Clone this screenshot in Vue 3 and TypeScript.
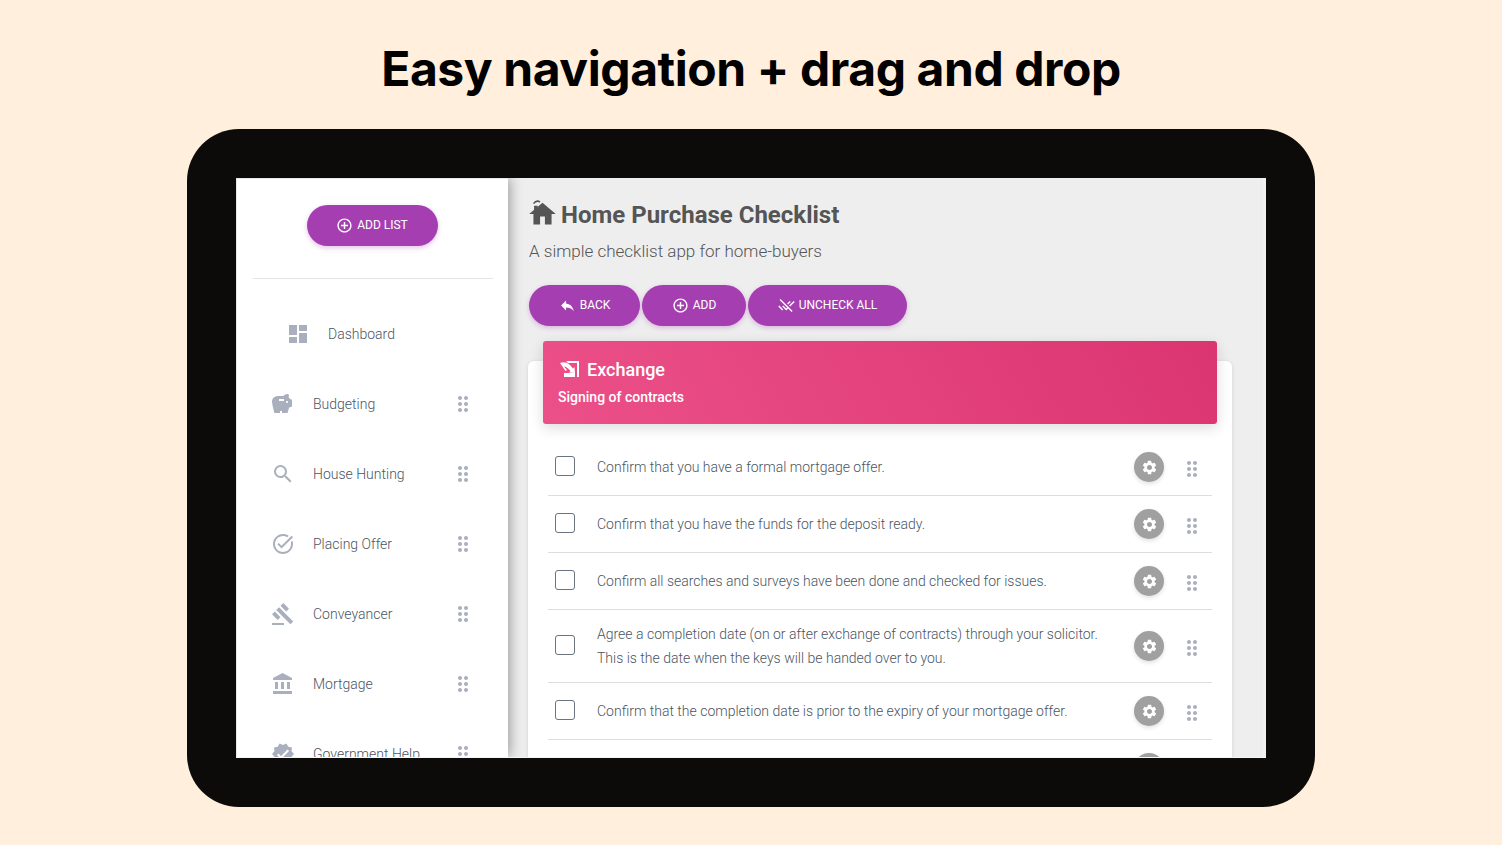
<script setup lang="ts">
interface NavItem {
  label: string;
  icon: string;
}

const icons = {
  plus: 'M13 7h-2v4H7v2h4v4h2v-4h4v-2h-4V7zm-1-5C6.48 2 2 6.48 2 12s4.48 10 10 10 10-4.48 10-10S17.52 2 12 2zm0 18c-4.41 0-8-3.59-8-8s3.59-8 8-8 8 3.59 8 8-3.59 8-8 8z',
  reply: 'M10 9V5l-7 7 7 7v-4.1c5 0 8.5 1.6 11 5.1-1-5-4-10-11-11z',
  removeDone: 'M1.79 12l5.58 5.59L5.96 19 .37 13.41 1.79 12zm.45-7.78L12.9 14.89l-1.28 1.28L7.44 12l-1.41 1.41L11.62 19l2.69-2.69 4.89 4.89 1.41-1.41L3.65 2.81 2.24 4.22zm14.9 9.27L23.62 7 22.2 5.59l-6.48 6.48 1.42 1.42zM17.96 7l-1.41-1.41-3.65 3.66 1.41 1.41L17.96 7z',
  dashboard: 'M3 13h8V3H3v10zm0 8h8v-6H3v6zm10 0h8V11h-8v10zm0-18v6h8V3h-8z',
  drag: 'M11 18c0 1.1-.9 2-2 2s-2-.9-2-2 .9-2 2-2 2 .9 2 2zm-2-8c-1.1 0-2 .9-2 2s.9 2 2 2 2-.9 2-2-.9-2-2-2zm0-6c-1.1 0-2 .9-2 2s.9 2 2 2 2-.9 2-2-.9-2-2-2zm6 4c1.1 0 2-.9 2-2s-.9-2-2-2-2 .9-2 2 .9 2 2 2zm0 2c-1.1 0-2 .9-2 2s.9 2 2 2 2-.9 2-2-.9-2-2-2zm0 6c-1.1 0-2 .9-2 2s.9 2 2 2 2-.9 2-2-.9-2-2-2z',
  gear: 'M19.14 12.94c.04-.3.06-.61.06-.94 0-.32-.02-.64-.07-.94l2.03-1.58c.18-.14.23-.41.12-.61l-1.92-3.32c-.12-.22-.37-.29-.59-.22l-2.39.96c-.5-.38-1.03-.7-1.62-.94l-.36-2.54c-.04-.24-.24-.41-.48-.41h-3.84c-.24 0-.43.17-.47.41l-.36 2.54c-.59.24-1.13.57-1.62.94l-2.39-.96c-.22-.08-.47 0-.59.22L2.74 8.87c-.12.21-.08.47.12.61l2.03 1.58c-.05.3-.09.63-.09.94s.02.64.07.94l-2.03 1.58c-.18.14-.23.41-.12.61l1.92 3.32c.12.22.37.29.59.22l2.39-.96c.5.38 1.03.7 1.62.94l.36 2.54c.05.24.24.41.48.41h3.84c.24 0 .44-.17.47-.41l.36-2.54c.59-.24 1.13-.56 1.62-.94l2.39.96c.22.08.47 0 .59-.22l1.92-3.32c.12-.22.07-.47-.12-.61l-2.01-1.58zM12 15.6c-1.98 0-3.6-1.62-3.6-3.6s1.62-3.6 3.6-3.6 3.6 1.62 3.6 3.6-1.62 3.6-3.6 3.6z',
  savings: 'M19.83 7.5l-2.27-2.27c.07-.42.18-.81.32-1.15.08-.18.12-.37.12-.58 0-.83-.67-1.5-1.5-1.5-1.64 0-3.09.79-4 2h-5C3.46 4 1 6.46 1 9.5S3.5 21 3.5 21H9v-2h2v2h5.5l1.68-5.59 2.82-.94V7.5h-1.17zM13 9H8V7h5v2zm3 2c-.55 0-1-.45-1-1s.45-1 1-1 1 .45 1 1-.45 1-1 1z',
  search: 'M15.5 14h-.79l-.28-.27A6.471 6.471 0 0 0 16 9.5 6.5 6.5 0 1 0 9.5 16c1.61 0 3.09-.59 4.23-1.57l.27.28v.79l5 4.99L20.49 19l-4.99-5zm-6 0C7.01 14 5 11.99 5 9.5S7.01 5 9.5 5 14 7.01 14 9.5 11.99 14 9.5 14z',
  taskAlt: 'M22 5.18L10.59 16.6l-4.24-4.24 1.41-1.41 2.83 2.83 10-10L22 5.18zm-2.21 5.04c.13.57.21 1.17.21 1.78 0 4.42-3.58 8-8 8s-8-3.58-8-8 3.58-8 8-8c1.58 0 3.04.46 4.28 1.22l1.44-1.44C16.1 2.67 14.13 2 12 2 6.48 2 2 6.48 2 12s4.48 10 10 10 10-4.48 10-10c0-1.19-.22-2.33-.6-3.39l-1.61 1.61z',
  gavel: 'M1 21h12v2H1zM5.245 8.07l2.83-2.827 14.14 14.142-2.828 2.828zM12.317 1l5.657 5.656-2.83 2.83-5.654-5.66zM3.825 9.485l5.657 5.657-2.828 2.828-5.657-5.657z',
  bank: 'M4 10v7h3v-7H4zm6 0v7h3v-7h-3zM2 22h19v-3H2v3zm14-12v7h3v-7h-3zm-4.5-9L2 6v2h19V6l-9.5-5z',
  verified: 'M23 12l-2.44-2.78.34-3.68-3.61-.82-1.89-3.18L12 3 8.6 1.54 6.71 4.72l-3.61.81.34 3.68L1 12l2.44 2.78-.34 3.69 3.61.82 1.89 3.18L12 21l3.4 1.46 1.89-3.18 3.61-.82-.34-3.68L23 12zm-13 5l-4-4 1.41-1.41L10 14.17l6.59-6.59L18 9l-8 8z',
  home: 'M10 21v-6.5h4V21h5.5v-8.5H23L12 3 1 12.5h3.5V21z',
};

const navItems: NavItem[] = [
  { label: 'Budgeting', icon: icons.savings },
  { label: 'House Hunting', icon: icons.search },
  { label: 'Placing Offer', icon: icons.taskAlt },
  { label: 'Conveyancer', icon: icons.gavel },
  { label: 'Mortgage', icon: icons.bank },
  { label: 'Government Help', icon: icons.verified },
];

// the last row sits below the fold, only the top of its button shows
const tasks: string[] = [
  'Confirm that you have a formal mortgage offer.',
  'Confirm that you have the funds for the deposit ready.',
  'Confirm all searches and surveys have been done and checked for issues.',
  'Agree a completion date (on or after exchange of contracts) through your solicitor. This is the date when the keys will be handed over to you.',
  'Confirm that the completion date is prior to the expiry of your mortgage offer.',
  '',
];
</script>

<template>
  <div class="page">
    <h1 class="headline">Easy navigation + drag and drop</h1>

    <div class="tablet">
      <div class="screen">
        <aside class="sidebar">
          <div class="sidebar-top">
            <button class="pill pill-add-list">
              <svg class="pill-icon" viewBox="0 0 24 24"><path :d="icons.plus" /></svg>
              ADD LIST
            </button>
          </div>
          <div class="sidebar-divider"></div>

          <nav class="nav">
            <div class="nav-row nav-row-dash">
              <svg class="nav-icon" viewBox="0 0 24 24"><path :d="icons.dashboard" /></svg>
              <span class="nav-label">Dashboard</span>
            </div>
            <div v-for="item in navItems" :key="item.label" class="nav-row">
              <svg class="nav-icon" viewBox="0 0 24 24"><path :d="item.icon" /></svg>
              <span class="nav-label">{{ item.label }}</span>
              <svg class="drag" viewBox="0 0 24 24"><path :d="icons.drag" /></svg>
            </div>
          </nav>
        </aside>

        <main class="main">
          <h2 class="title">
            <svg class="title-icon" viewBox="0 0 24 24">
              <path :d="icons.home" />
              <path d="M5 9.5V5.500h3v1.500z" />
              <path d="M4.600 3.800C6 1.800 8.200 1.400 10 2.400" fill="none" stroke="#555" stroke-width="1.300" />
            </svg>
            Home Purchase Checklist
          </h2>
          <p class="subtitle">A simple checklist app for home-buyers</p>

          <div class="actions">
            <button class="pill pill-back">
              <svg class="pill-icon" viewBox="0 0 24 24"><path :d="icons.reply" /></svg>
              BACK
            </button>
            <button class="pill pill-add">
              <svg class="pill-icon" viewBox="0 0 24 24"><path :d="icons.plus" /></svg>
              ADD
            </button>
            <button class="pill pill-uncheck">
              <svg class="pill-icon" viewBox="0 0 24 24"><path :d="icons.removeDone" /></svg>
              UNCHECK ALL
            </button>
          </div>

          <section class="card">
            <header class="card-header">
              <div class="card-title">
                <svg class="card-icon" viewBox="0 0 20 18">
                  <path d="M6 1h13v16h-2V3H8z" />
                  <path d="M0 3C3 1.500 7 2 10 5l3 3.500L14.500 7l.5 6-6-.5 1.500-1.500C8 8 6 6.500 4 6.500L7 10l-1.500 1z" />
                  <path d="M4 13h11v4H4z" />
                </svg>
                Exchange
              </div>
              <div class="card-sub">Signing of contracts</div>
            </header>

            <ul class="tasks">
              <li v-for="(task, i) in tasks" :key="i" class="task">
                <span class="checkbox"></span>
                <span class="task-text">{{ task }}</span>
                <span class="gear-btn">
                  <svg class="gear" viewBox="0 0 24 24"><path :d="icons.gear" /></svg>
                </span>
                <svg class="drag task-drag" viewBox="0 0 24 24"><path :d="icons.drag" /></svg>
              </li>
            </ul>
          </section>
        </main>
      </div>
    </div>
  </div>
</template>

<style>
html,
body {
  margin: 0;
  background: #ffefdc;
}
</style>

<style scoped>
.page {
  height: 845px;
  overflow: hidden;
  display: flex;
  flex-direction: column;
  align-items: center;
  background: #ffefdc;
  font-family: Roboto, "Liberation Sans", sans-serif;
}

.headline {
  margin: 0;
  height: 129px;
  box-sizing: border-box;
  padding-top: 40px;
  font-family: Inter, Roboto, sans-serif;
  font-size: 48px;
  line-height: 58px;
  font-weight: 700;
  letter-spacing: -0.42px;
  color: #000;
}

.tablet {
  width: 1128px;
  height: 678px;
  box-sizing: border-box;
  padding: 49px;
  background: #0c0b0a;
  border-radius: 52px;
}

.screen {
  display: flex;
  height: 580px;
  box-sizing: border-box;
  border-bottom: 1px solid #f6f6f6;
  overflow: hidden;
  background: #eeeeee;
}

.sidebar {
  position: relative;
  z-index: 1;
  flex: 0 0 272px;
  background: #fff;
  box-shadow: 2px 0 12px rgba(0, 0, 0, 0.35), inset 1px 1px 0 #e8e8e8;
}

.sidebar-top {
  display: flex;
  justify-content: center;
  padding: 27px 0 32px;
}

.sidebar-divider {
  height: 1px;
  margin: 0 15px 0 17px;
  background: #e5e5e5;
}

.nav {
  padding-top: 20px;
}

.nav-row {
  display: flex;
  align-items: center;
  height: 70px;
  padding: 0 33px 0 35px;
}

.nav-row-dash {
  padding-left: 50px;
}

.nav-icon {
  flex: 0 0 24px;
  width: 24px;
  height: 24px;
  fill: #a9afbd;
}

.nav-label {
  flex: 1;
  margin-left: 18px;
  font-size: 14px;
  font-weight: 300;
  color: #4b5563;
}

.drag {
  flex: 0 0 24px;
  width: 24px;
  height: 24px;
  fill: #a9afbd;
}

.pill {
  display: flex;
  align-items: center;
  justify-content: center;
  gap: 4px;
  height: 41px;
  padding: 0 0 1px;
  border: 0;
  border-radius: 21px;
  background: #a53fb1;
  box-shadow: 0 2px 5px rgba(165, 63, 177, 0.3);
  color: #fff;
  font-family: inherit;
  font-size: 12px;
  font-weight: 400;
}

.pill-icon {
  width: 17px;
  height: 17px;
  fill: #fff;
}

.pill-add-list {
  width: 131px;
}

.pill-back {
  width: 111px;
}

.pill-add {
  width: 104px;
}

.pill-uncheck {
  width: 159px;
}

.main {
  flex: 1;
  min-width: 0;
  padding: 21px 0 0 20px;
  border-right: 3px solid #f2f2f2;
}

.title {
  display: flex;
  align-items: center;
  gap: 4px;
  margin: 0;
  height: 32px;
  font-size: 24px;
  font-weight: 700;
  color: #555;
}

.title-icon {
  width: 29px;
  height: 29px;
  margin-top: -3px;
  fill: #555;
}

.subtitle {
  margin: 6px 0 0 1px;
  height: 28px;
  font-size: 17px;
  line-height: 28px;
  font-weight: 300;
  color: #555;
}

.actions {
  display: flex;
  gap: 2px;
  margin: 20px 0 0 1px;
}

.card {
  width: 704px;
  margin-top: 35px;
  background: #fff;
  border-radius: 6px;
  box-shadow: 0 1px 4px rgba(0, 0, 0, 0.12);
}

.card-header {
  position: relative;
  top: -20px;
  height: 83px;
  box-sizing: border-box;
  margin: 0 15px;
  padding: 16px 15px 0;
  border-radius: 3px;
  background: linear-gradient(60deg, #ec5089, #db3570);
  box-shadow: 0 4px 14px rgba(0, 0, 0, 0.14);
  color: #fff;
}

.card-title {
  display: flex;
  align-items: center;
  gap: 7px;
  height: 24px;
  font-size: 18px;
  font-weight: 500;
}

.card-icon {
  width: 20px;
  height: 18px;
  margin-left: 2px;
  fill: #fff;
}

.card-sub {
  margin-top: 4px;
  font-size: 14px;
  font-weight: 500;
  line-height: 24px;
}

.tasks {
  list-style: none;
  margin: -5px 20px 0;
  padding: 0;
}

.task {
  display: flex;
  align-items: center;
  min-height: 56px;
  border-bottom: 1px solid #ddd;
  color: #4b5563;
}

.checkbox {
  flex: 0 0 18px;
  width: 18px;
  height: 18px;
  margin: -2px 0 0 7px;
  border: 1px solid #6b7280;
  border-radius: 3px;
}

.task-text {
  flex: 0 0 516px;
  margin-left: 22px;
  padding: 12px 0;
  font-size: 14px;
  line-height: 24px;
  font-weight: 300;
}

.gear-btn {
  display: flex;
  align-items: center;
  justify-content: center;
  width: 30px;
  height: 30px;
  margin-left: 21px;
  border-radius: 50%;
  background: #a0a0a0;
  box-shadow: 0 2px 4px rgba(0, 0, 0, 0.12);
}

.gear {
  width: 17px;
  height: 17px;
  fill: #fff;
}

.task-drag {
  margin-left: 16px;
  margin-top: 4px;
}
</style>
